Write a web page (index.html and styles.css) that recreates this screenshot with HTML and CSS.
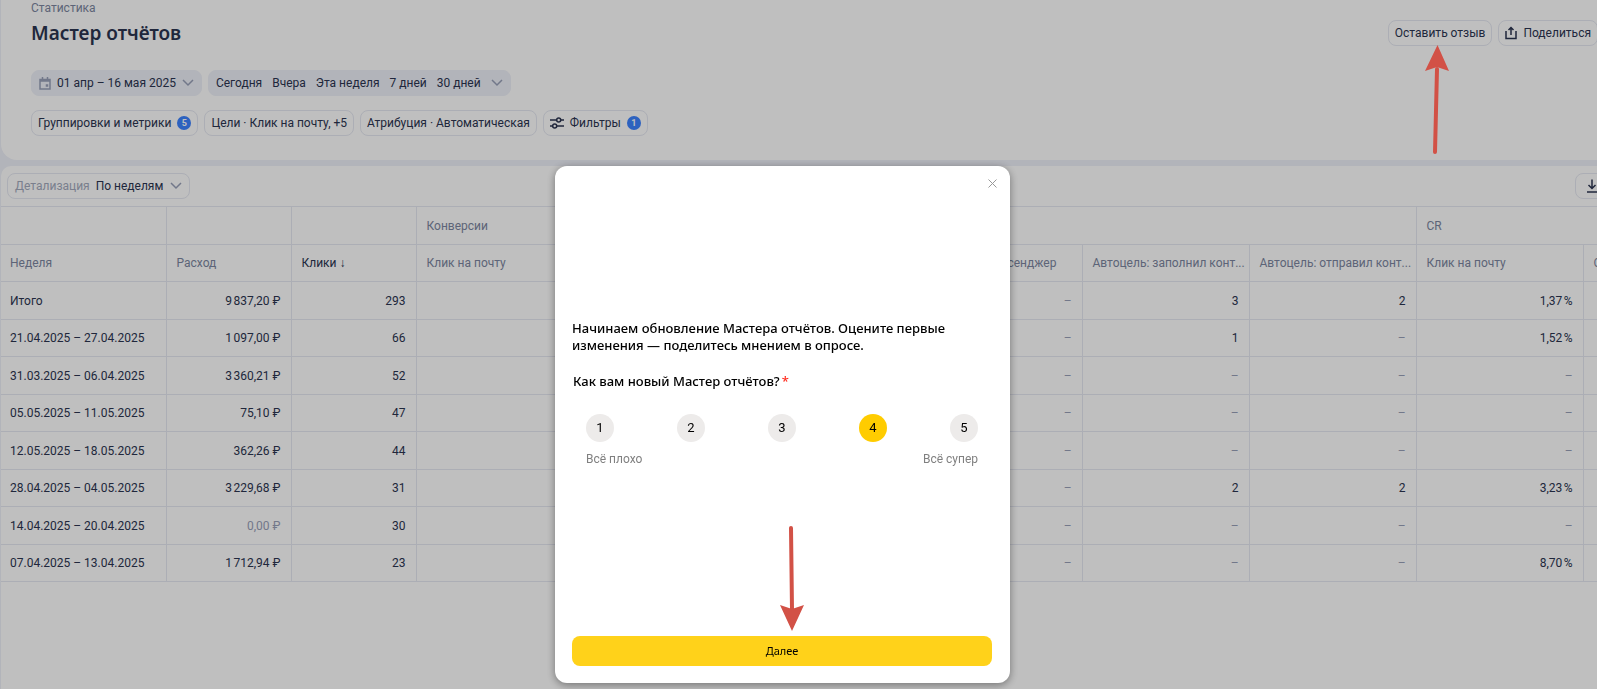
FILE: index.html
```
<!DOCTYPE html>
<html lang="ru">
<head>
    <meta charset="UTF-8">
    <meta name="viewport" content="width=device-width, initial-scale=1.0">
    <title>Мастер отчётов</title>
    <link rel="stylesheet" href="styles.css">
</head>
<body>
    <div class="page">
        <header class="report-header">
            <a class="breadcrumb" href="#">Статистика</a>
            <div class="title-row">
                <h1>Мастер отчётов</h1>
                <div class="actions">
                    <button type="button" class="btn">Оставить отзыв</button>
                    <button type="button" class="btn">
                        <svg class="icon" width="12" height="14" viewBox="0 0 12 14"><path d="M1 5v7.500h10V5M6 9V2M3.500 4L6 1.500 8.500 4"/></svg>
                        Поделиться
                    </button>
                </div>
            </div>
            <div class="periods">
                <button type="button" class="period">
                    <svg class="icon muted" width="12" height="13" viewBox="0 0 12 13"><path d="M1 2.500h10v9.500H1zM1 4h10M3.500 0v2M8.500 0v2"/><path d="M7.500 8h1v1h-1z"/></svg>
                    01 апр – 16 мая 2025
                    <svg class="icon muted" width="12" height="8" viewBox="0 0 12 8"><path d="M1 1l5 5 5-5"/></svg>
                </button>
                <div class="period presets">
                    <button type="button">Сегодня</button>
                    <button type="button">Вчера</button>
                    <button type="button">Эта неделя</button>
                    <button type="button">7 дней</button>
                    <button type="button">30 дней</button>
                    <button type="button" aria-label="Ещё периоды"><svg class="icon muted" width="12" height="8" viewBox="0 0 12 8"><path d="M1 1l5 5 5-5"/></svg></button>
                </div>
            </div>
            <div class="filters">
                <button type="button" class="btn">Группировки и метрики <span class="badge">5</span></button>
                <button type="button" class="btn">Цели · Клик на почту, +5</button>
                <button type="button" class="btn">Атрибуция · Автоматическая</button>
                <button type="button" class="btn">
                    <svg class="icon" width="14" height="12" viewBox="0 0 14 12"><path d="M0 3h6.500M11 3h3M0 9h2.500M7 9h7"/><circle cx="8.700" cy="3" r="2"/><circle cx="4.700" cy="9" r="2"/></svg>
                    Фильтры <span class="badge">1</span>
                </button>
            </div>
        </header>

        <main class="report">
            <div class="toolbar">
                <div class="btn detail">
                    <label for="detail">Детализация</label>
                    <select id="detail">
                        <option>По неделям</option>
                    </select>
                    <svg class="icon muted" width="12" height="8" viewBox="0 0 12 8"><path d="M1 1l5 5 5-5"/></svg>
                </div>
                <button type="button" class="btn" aria-label="Скачать">
                    <svg class="icon" width="12" height="14" viewBox="0 0 12 14"><path d="M6 0.500v9M2.500 6L6 9.500 9.500 6M1 13h10"/></svg>
                </button>
            </div>
            <div class="table-wrap">
                <table>
                    <colgroup>
                        <col class="col-week">
                        <col class="col-num" span="2">
                        <col class="col-goal-first" span="2">
                        <col class="col-goal" span="6">
                    </colgroup>
                    <thead>
                        <tr><th></th><th></th><th></th><th colspan="6">Конверсии</th><th colspan="2">CR</th></tr>
                        <tr><th>Неделя</th><th>Расход</th><th class="sorted">Клики ↓</th><th>Клик на почту</th><th></th><th></th><th>Переход в мессенджер</th><th title="Автоцель: заполнил контактные данные">Автоцель: заполнил конт...</th><th title="Автоцель: отправил контактные данные">Автоцель: отправил конт...</th><th>Клик на почту</th><th>Отправка формы</th></tr>
                    </thead>
                    <tbody>
                        <tr><td>Итого</td><td>9&#8239;837,20 ₽</td><td>293</td><td></td><td></td><td></td><td class="zero">–</td><td>3</td><td>2</td><td>1,37&#8239;%</td><td></td></tr>
                        <tr><td>21.04.2025 – 27.04.2025</td><td>1&#8239;097,00 ₽</td><td>66</td><td></td><td></td><td></td><td class="zero">–</td><td>1</td><td class="zero">–</td><td>1,52&#8239;%</td><td></td></tr>
                        <tr><td>31.03.2025 – 06.04.2025</td><td>3&#8239;360,21 ₽</td><td>52</td><td></td><td></td><td></td><td class="zero">–</td><td class="zero">–</td><td class="zero">–</td><td class="zero">–</td><td></td></tr>
                        <tr><td>05.05.2025 – 11.05.2025</td><td>75,10 ₽</td><td>47</td><td></td><td></td><td></td><td class="zero">–</td><td class="zero">–</td><td class="zero">–</td><td class="zero">–</td><td></td></tr>
                        <tr><td>12.05.2025 – 18.05.2025</td><td>362,26 ₽</td><td>44</td><td></td><td></td><td></td><td class="zero">–</td><td class="zero">–</td><td class="zero">–</td><td class="zero">–</td><td></td></tr>
                        <tr><td>28.04.2025 – 04.05.2025</td><td>3&#8239;229,68 ₽</td><td>31</td><td></td><td></td><td></td><td class="zero">–</td><td>2</td><td>2</td><td>3,23&#8239;%</td><td></td></tr>
                        <tr><td>14.04.2025 – 20.04.2025</td><td class="zero">0,00 ₽</td><td>30</td><td></td><td></td><td></td><td class="zero">–</td><td class="zero">–</td><td class="zero">–</td><td class="zero">–</td><td></td></tr>
                        <tr><td>07.04.2025 – 13.04.2025</td><td>1&#8239;712,94 ₽</td><td>23</td><td></td><td></td><td></td><td class="zero">–</td><td class="zero">–</td><td class="zero">–</td><td>8,70&#8239;%</td><td></td></tr>
                    </tbody>
                </table>
            </div>
        </main>
    </div>

    <div class="overlay">
        <form class="survey" role="dialog" aria-labelledby="survey-title">
            <button type="button" class="close" aria-label="Закрыть">
                <svg width="9" height="9" viewBox="0 0 9 9"><path d="M0.500 0.500l8 8M8.500 0.500l-8 8"/></svg>
            </button>
            <h2 id="survey-title">Начинаем обновление Мастера отчётов. Оцените первые изменения — поделитесь мнением в опросе.</h2>
            <fieldset>
                <legend>Как вам новый Мастер отчётов?<span class="required">*</span></legend>
                <div class="scale">
                    <label><input type="radio" name="score" value="1"><span>1</span></label>
                    <label><input type="radio" name="score" value="2"><span>2</span></label>
                    <label><input type="radio" name="score" value="3"><span>3</span></label>
                    <label><input type="radio" name="score" value="4" checked><span>4</span></label>
                    <label><input type="radio" name="score" value="5"><span>5</span></label>
                </div>
                <div class="scale-hints"><span>Всё плохо</span><span>Всё супер</span></div>
            </fieldset>
            <button type="submit" class="next">Далее</button>
            <svg class="arrow arrow-next" width="24" height="106" viewBox="0 0 24 106"><path class="shaft" d="M11 3l1 82"/><path d="M12 106L0 80l12 4 12-4z"/></svg>
        </form>
        <svg class="arrow arrow-feedback" width="24" height="110" viewBox="0 0 24 110"><path class="shaft" d="M12 24l-2 83"/><path d="M12.500 0L0 26l12-4 12 4z"/></svg>
    </div>
</body>
</html>
```
FILE: styles.css
```
* {
    box-sizing: border-box;
}

body {
    margin: 0;
    min-height: 100vh;
    overflow: hidden;
    font-family: Roboto, "Noto Sans", sans-serif;
    font-size: 12px;
    line-height: 16px;
    color: #2b3450;
    background: #eef0f8;
}

button,
select {
    font: inherit;
    color: inherit;
    background: none;
    border: none;
    padding: 0;
    cursor: pointer;
}

/* The report is a little wider than the window and is cut at the right */
.page {
    display: flex;
    flex-direction: column;
    gap: 6px;
    width: calc(100% + 12px);
    min-height: 100vh;
    padding-left: 1px;
}

.report-header {
    background: #fff;
    border-radius: 0 0 0 16px;
    padding: 0 11px 24px 30px;
}

.breadcrumb {
    display: block;
    color: #7c86a0;
    text-decoration: none;
}

.title-row {
    display: flex;
    justify-content: space-between;
    align-items: center;
    margin-top: 4px;
}

h1 {
    margin: 0;
    font-family: "Noto Sans", sans-serif;
    font-size: 19px;
    line-height: 26px;
    font-weight: 600;
}

.actions,
.periods,
.filters {
    display: flex;
    gap: 6px;
}

.periods {
    margin-top: 24px;
}

.filters {
    margin-top: 14px;
}

.btn,
.period {
    display: flex;
    align-items: center;
    gap: 6px;
    height: 26px;
    padding: 0 7px;
    border: 1px solid #e6e8f2;
    border-radius: 8px;
    white-space: nowrap;
}

.actions .btn,
.filters .btn {
    padding: 0 6px;
}

.period {
    border-color: #eef0f8;
    background: #eef0f8;
}

.presets {
    gap: 10px;
}

.presets button {
    display: flex;
}

.badge {
    width: 14px;
    height: 14px;
    border-radius: 50%;
    background: #3d83ff;
    color: #fff;
    font-size: 9px;
    line-height: 14px;
    font-weight: 700;
    text-align: center;
}

.icon {
    flex: none;
    fill: none;
    stroke: #2b3450;
    stroke-width: 1.5;
}

.muted {
    stroke: #98a0b8;
}

.report {
    flex: 1;
    background: #fff;
    border-radius: 10px 0 0 0;
}

.toolbar {
    display: flex;
    justify-content: space-between;
    padding: 7px 0 7px 6px;
}

.detail label {
    color: #a3aabd;
}

.detail select {
    appearance: none;
    color: #2b3450;
}

.toolbar > button {
    padding: 0 10px;
}

.table-wrap {
    overflow: hidden;
}

table {
    table-layout: fixed;
    width: 1749px;
    border-collapse: collapse;
}

.col-week {
    width: 165px;
}

.col-num {
    width: 125px;
}

.col-goal-first {
    width: 166px;
}

.col-goal {
    width: 167px;
}

tr {
    height: 38px;
}

tr:nth-child(even) {
    height: 37px;
}

th,
td {
    padding: 0 10px;
    border: 1px solid #e6e8f2;
    border-left: none;
    text-align: right;
    white-space: nowrap;
}

th {
    color: #7c86a0;
    font-weight: 400;
    text-align: left;
}

th:first-child,
td:first-child {
    padding-left: 9px;
    text-align: left;
}

.sorted {
    color: #2b3450;
}

.zero {
    color: #98a0b8;
}

.overlay {
    position: fixed;
    inset: 0;
    display: flex;
    justify-content: center;
    align-items: flex-end;
    padding: 0 32px 6px 0;
    background: rgba(0, 0, 0, 0.25);
}

.survey {
    position: relative;
    width: 455px;
    padding: 154px 18px 17px 17px;
    border-radius: 12px;
    background: #fff;
    color: #000;
    box-shadow: 0 2px 8px rgba(0, 0, 0, 0.4);
}

.survey h2,
.survey legend {
    margin: 0;
    padding: 0;
    font-family: "Noto Sans", sans-serif;
    font-size: 13px;
    line-height: 17px;
    font-weight: 500;
}

.survey fieldset {
    margin: 19px 0 0;
    padding: 0 14px;
    border: none;
}

.survey legend {
    margin-left: -13px;
}

.required {
    margin-left: 2px;
    color: #ff2d20;
}

.close {
    position: absolute;
    top: 13px;
    right: 13px;
    display: flex;
}

.close svg {
    stroke: #999;
}

.scale,
.scale-hints {
    display: flex;
    justify-content: space-between;
}

.scale {
    margin-top: 24px;
}

.scale label {
    cursor: pointer;
}

.scale input {
    position: absolute;
    opacity: 0;
}

.scale span {
    display: block;
    width: 28px;
    height: 28px;
    border-radius: 50%;
    background: #edebea;
    font-size: 13px;
    line-height: 28px;
    text-align: center;
}

.scale input:checked + span {
    background: #fc0;
}

.scale-hints {
    margin-top: 9px;
    color: #808080;
}

.next {
    width: 100%;
    height: 30px;
    margin-top: 169px;
    border-radius: 8px;
    background: #ffd21a;
    font-family: "Noto Sans", sans-serif;
    font-size: 11px;
}

/* Hint arrows over the page */
.arrow {
    position: absolute;
    fill: #d25146;
}

.shaft {
    stroke: #d25146;
    stroke-width: 4;
    stroke-linecap: round;
}

.arrow-next {
    left: 225px;
    bottom: 52px;
}

.arrow-feedback {
    top: 45px;
    right: 148px;
}
```
